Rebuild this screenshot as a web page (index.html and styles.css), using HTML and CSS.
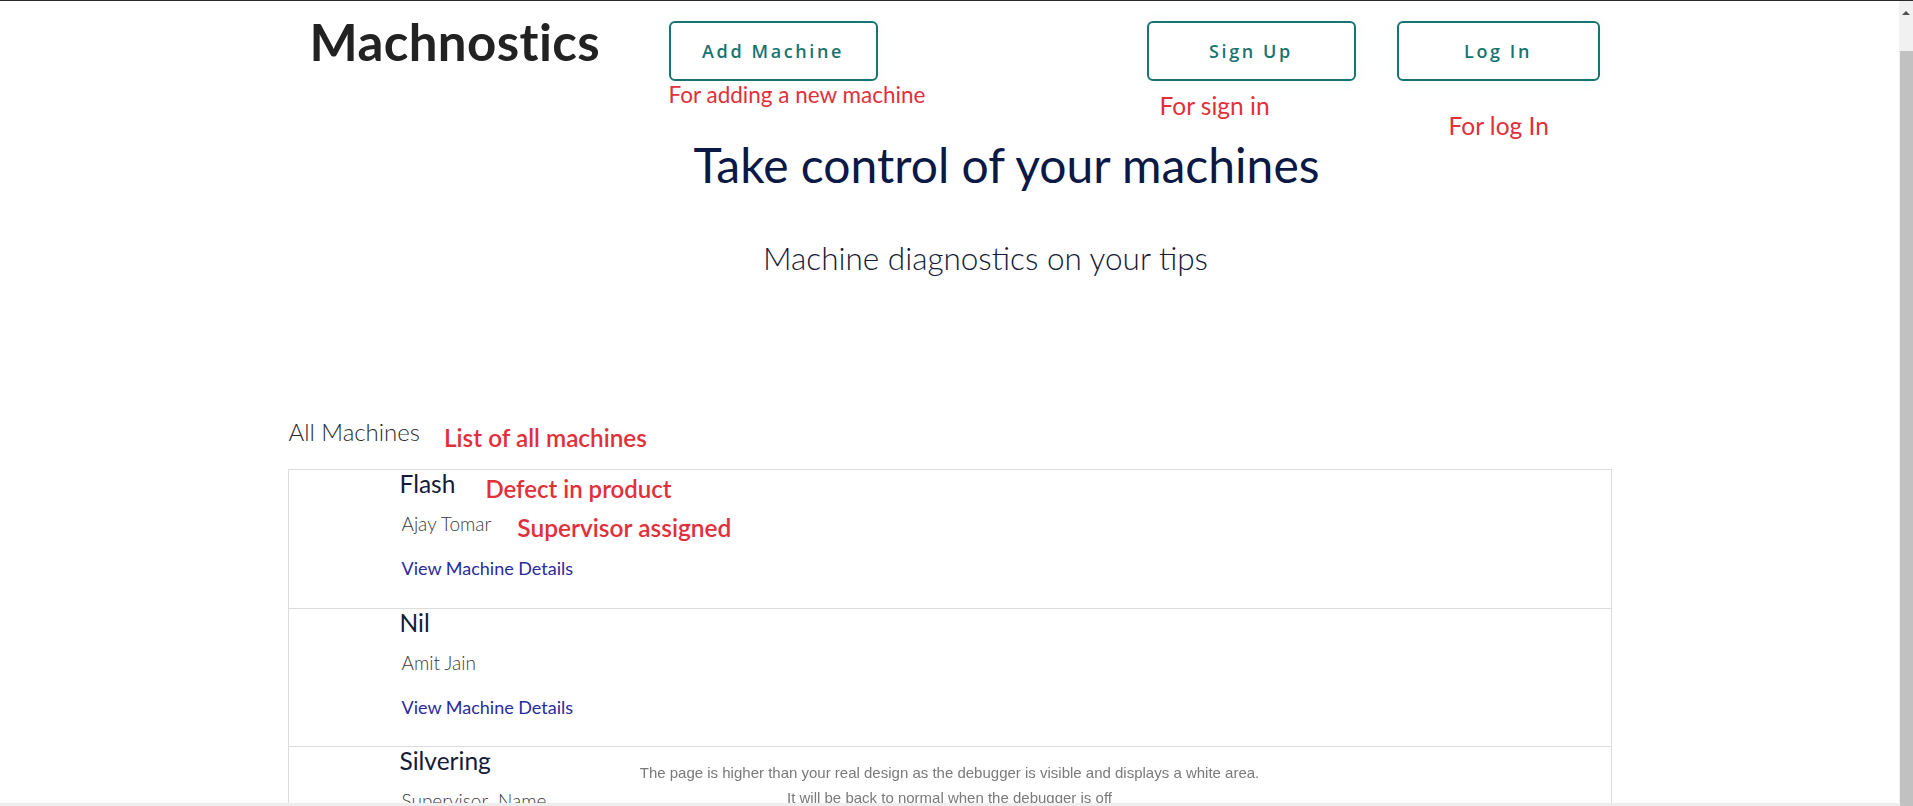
FILE: index.html
```html
<!DOCTYPE html>
<html lang="en">
<head>
<meta charset="utf-8">
<title>Machnostics</title>
<link rel="stylesheet" href="styles.css">
</head>
<body>
<div class="topline"></div>
<div class="viewport">
  <div class="page">
    <header class="header">
      <div class="logo">Machnostics</div>
      <div class="btn-col col-add">
        <a class="btn btn-add" href="#">Add Machine</a>
        <span class="note note-add">For adding a new machine</span>
      </div>
      <div class="btn-col col-signup">
        <a class="btn btn-signup" href="#">Sign Up</a>
        <span class="note note-signup">For sign in</span>
      </div>
      <div class="btn-col col-login">
        <a class="btn btn-login" href="#">Log In</a>
        <span class="note note-login">For log In</span>
      </div>
    </header>

    <section class="hero">
      <h1 class="hero-title">Take control of your machines</h1>
      <p class="hero-sub">Machine diagnostics on your tips</p>
    </section>

    <section class="machines">
      <div class="list-head">
        <h2 class="list-title">All Machines</h2>
        <span class="note note-list">List of all machines</span>
      </div>
      <div class="card">
        <div class="row">
          <div class="row-line">
            <h3 class="m-name">Flash</h3>
            <span class="note note-defect">Defect in product</span>
          </div>
          <div class="row-line">
            <p class="m-sup">Ajay Tomar</p>
            <span class="note note-sup">Supervisor assigned</span>
          </div>
          <a class="m-link" href="#">View Machine Details</a>
        </div>
        <div class="row">
          <div class="row-line"><h3 class="m-name">Nil</h3></div>
          <div class="row-line"><p class="m-sup">Amit Jain</p></div>
          <a class="m-link" href="#">View Machine Details</a>
        </div>
        <div class="row">
          <div class="row-line"><h3 class="m-name">Silvering</h3></div>
          <div class="row-line"><p class="m-sup">Supervisor&nbsp; Name</p></div>
          <a class="m-link" href="#">View Machine Details</a>
        </div>
      </div>
    </section>
  </div>
</div>

<div class="debug-msg">
  <p>The page is higher than your real design as the debugger is visible and displays a white area.</p>
  <p>It will be back to normal when the debugger is off</p>
</div>
<div class="bottom-bar"></div>
<div class="scrollbar">
  <div class="scroll-arrow"></div>
  <div class="scroll-thumb"></div>
</div>
</body>
</html>
```

FILE: styles.css
```css
html, body {
  margin: 0;
  padding: 0;
  background: #ffffff;
  overflow: hidden;
  height: 100%;
}

body {
  font-family: Lato, "Open Sans", sans-serif;
  color: #222;
}

.topline {
  height: 1px;
  background: #2a2a2a;
}

.viewport {
  width: calc(100% - 14px);
}

.page {
  width: 1324px;
  margin: 0 auto;
}

/* Header */
.header {
  display: grid;
  grid-template-columns: 381px 478px 250px auto;
  padding-top: 20px;
  height: 140px;
  box-sizing: border-box;
}

.logo {
  padding-left: 22px;
  font-family: Lato, sans-serif;
  font-weight: 700;
  font-size: 51px;
  line-height: 1;
  margin-top: -5px;
  color: #222;
  letter-spacing: 0.4px;
}

.btn-col {
  display: flex;
  flex-direction: column;
  align-items: flex-start;
}

.btn {
  display: flex;
  align-items: center;
  justify-content: center;
  height: 60px;
  box-sizing: border-box;
  border: 2px solid #187470;
  border-radius: 6px;
  color: #187470;
  text-decoration: none;
  font-family: "Open Sans", sans-serif;
  font-weight: 600;
  font-size: 18px;
  letter-spacing: 2.6px;
  box-shadow: 0 0 14px rgba(200, 215, 225, 0.18);
}

.btn-add { width: 209px; }
.btn-signup { width: 209px; }
.btn-login { width: 203px; }

.note {
  font-family: Lato, "Open Sans", sans-serif;
  color: #e1303a;
  font-size: 21px;
  line-height: 1;
}

.note-add { margin-top: 3px; font-size: 22.5px; }
.note-signup { margin-top: 13px; margin-left: 13px; font-size: 24.5px; }
.note-login { margin-top: 33px; margin-left: 52px; font-size: 24.5px; }

/* Hero */
.hero {
  text-align: center;
}

.hero-title {
  margin: 0;
  padding-left: 114px;
  font-family: Lato, sans-serif;
  font-weight: 400;
  font-size: 48px;
  line-height: 1;
  color: #0c1845;
}

.hero-sub {
  margin: 54px 0 0;
  padding-left: 72px;
  font-family: Lato, sans-serif;
  font-weight: 300;
  font-size: 31.5px;
  line-height: 1;
  color: #141a38;
}

/* Machines list */
.machines {
  margin-top: 145px;
}

.list-head {
  display: flex;
  align-items: baseline;
  height: 25px;
  padding-left: 1px;
}

.list-title {
  margin: 0;
  font-family: Lato, sans-serif;
  font-weight: 300;
  font-size: 24px;
  line-height: 1;
  color: #2b2b2b;
}

.note-list {
  margin-left: 24px;
  font-size: 24.3px;
  font-weight: 600;
  position: relative;
  top: 6px;
}

.card {
  margin-top: 24px;
  border: 1px solid #dcdcdc;
  border-bottom: 0;
}

.row {
  height: 138px;
  box-sizing: border-box;
  border-top: 1px solid #dcdcdc;
  padding: 0 0 0 111px;
  display: flex;
  flex-direction: column;
  align-items: flex-start;
}

.row:first-child {
  border-top: 0;
}

.row-line {
  display: flex;
  align-items: baseline;
}

.m-name {
  margin: 0;
  font-family: Lato, sans-serif;
  font-weight: 400;
  font-size: 24.5px;
  line-height: 28px;
  color: #141b3a;
}

.note-defect {
  margin-left: 30px;
  font-size: 24px;
  font-weight: 600;
  position: relative;
  top: 5px;
}

.m-sup {
  margin: 14px 0 0 2px;
  font-family: Lato, sans-serif;
  font-weight: 300;
  font-size: 19px;
  line-height: 24px;
  color: #3a3a3a;
}

.note-sup {
  margin-left: 26px;
  font-size: 24.5px;
  font-weight: 600;
  position: relative;
  top: 6px;
}

.m-link {
  margin: 20px 0 0 2px;
  font-family: Lato, sans-serif;
  font-weight: 400;
  font-size: 18px;
  line-height: 24px;
  color: #2a2aa0;
  text-decoration: none;
}

/* Overlays */
.debug-msg {
  position: fixed;
  left: 0;
  right: 14px;
  top: 764px;
  text-align: center;
  font-family: "Liberation Sans", Arial, sans-serif;
  font-size: 15px;
  color: #7a7a7a;
  pointer-events: none;
}

.debug-msg p {
  margin: 0 0 8px;
  line-height: 17px;
}

.bottom-bar {
  position: fixed;
  left: 0;
  right: 14px;
  bottom: 0;
  height: 3px;
  background: #eeeeee;
}

.scrollbar {
  position: fixed;
  top: 1px;
  right: 0;
  bottom: 0;
  width: 14px;
  background: #f1f1f1;
}

.scroll-arrow {
  position: absolute;
  top: 10px;
  left: 3px;
  width: 0;
  height: 0;
  border-left: 4px solid transparent;
  border-right: 4px solid transparent;
  border-bottom: 4px solid #505050;
}

.scroll-thumb {
  position: absolute;
  top: 50px;
  left: 1px;
  right: 0;
  bottom: 0;
  background: #c1c1c1;
}
```
